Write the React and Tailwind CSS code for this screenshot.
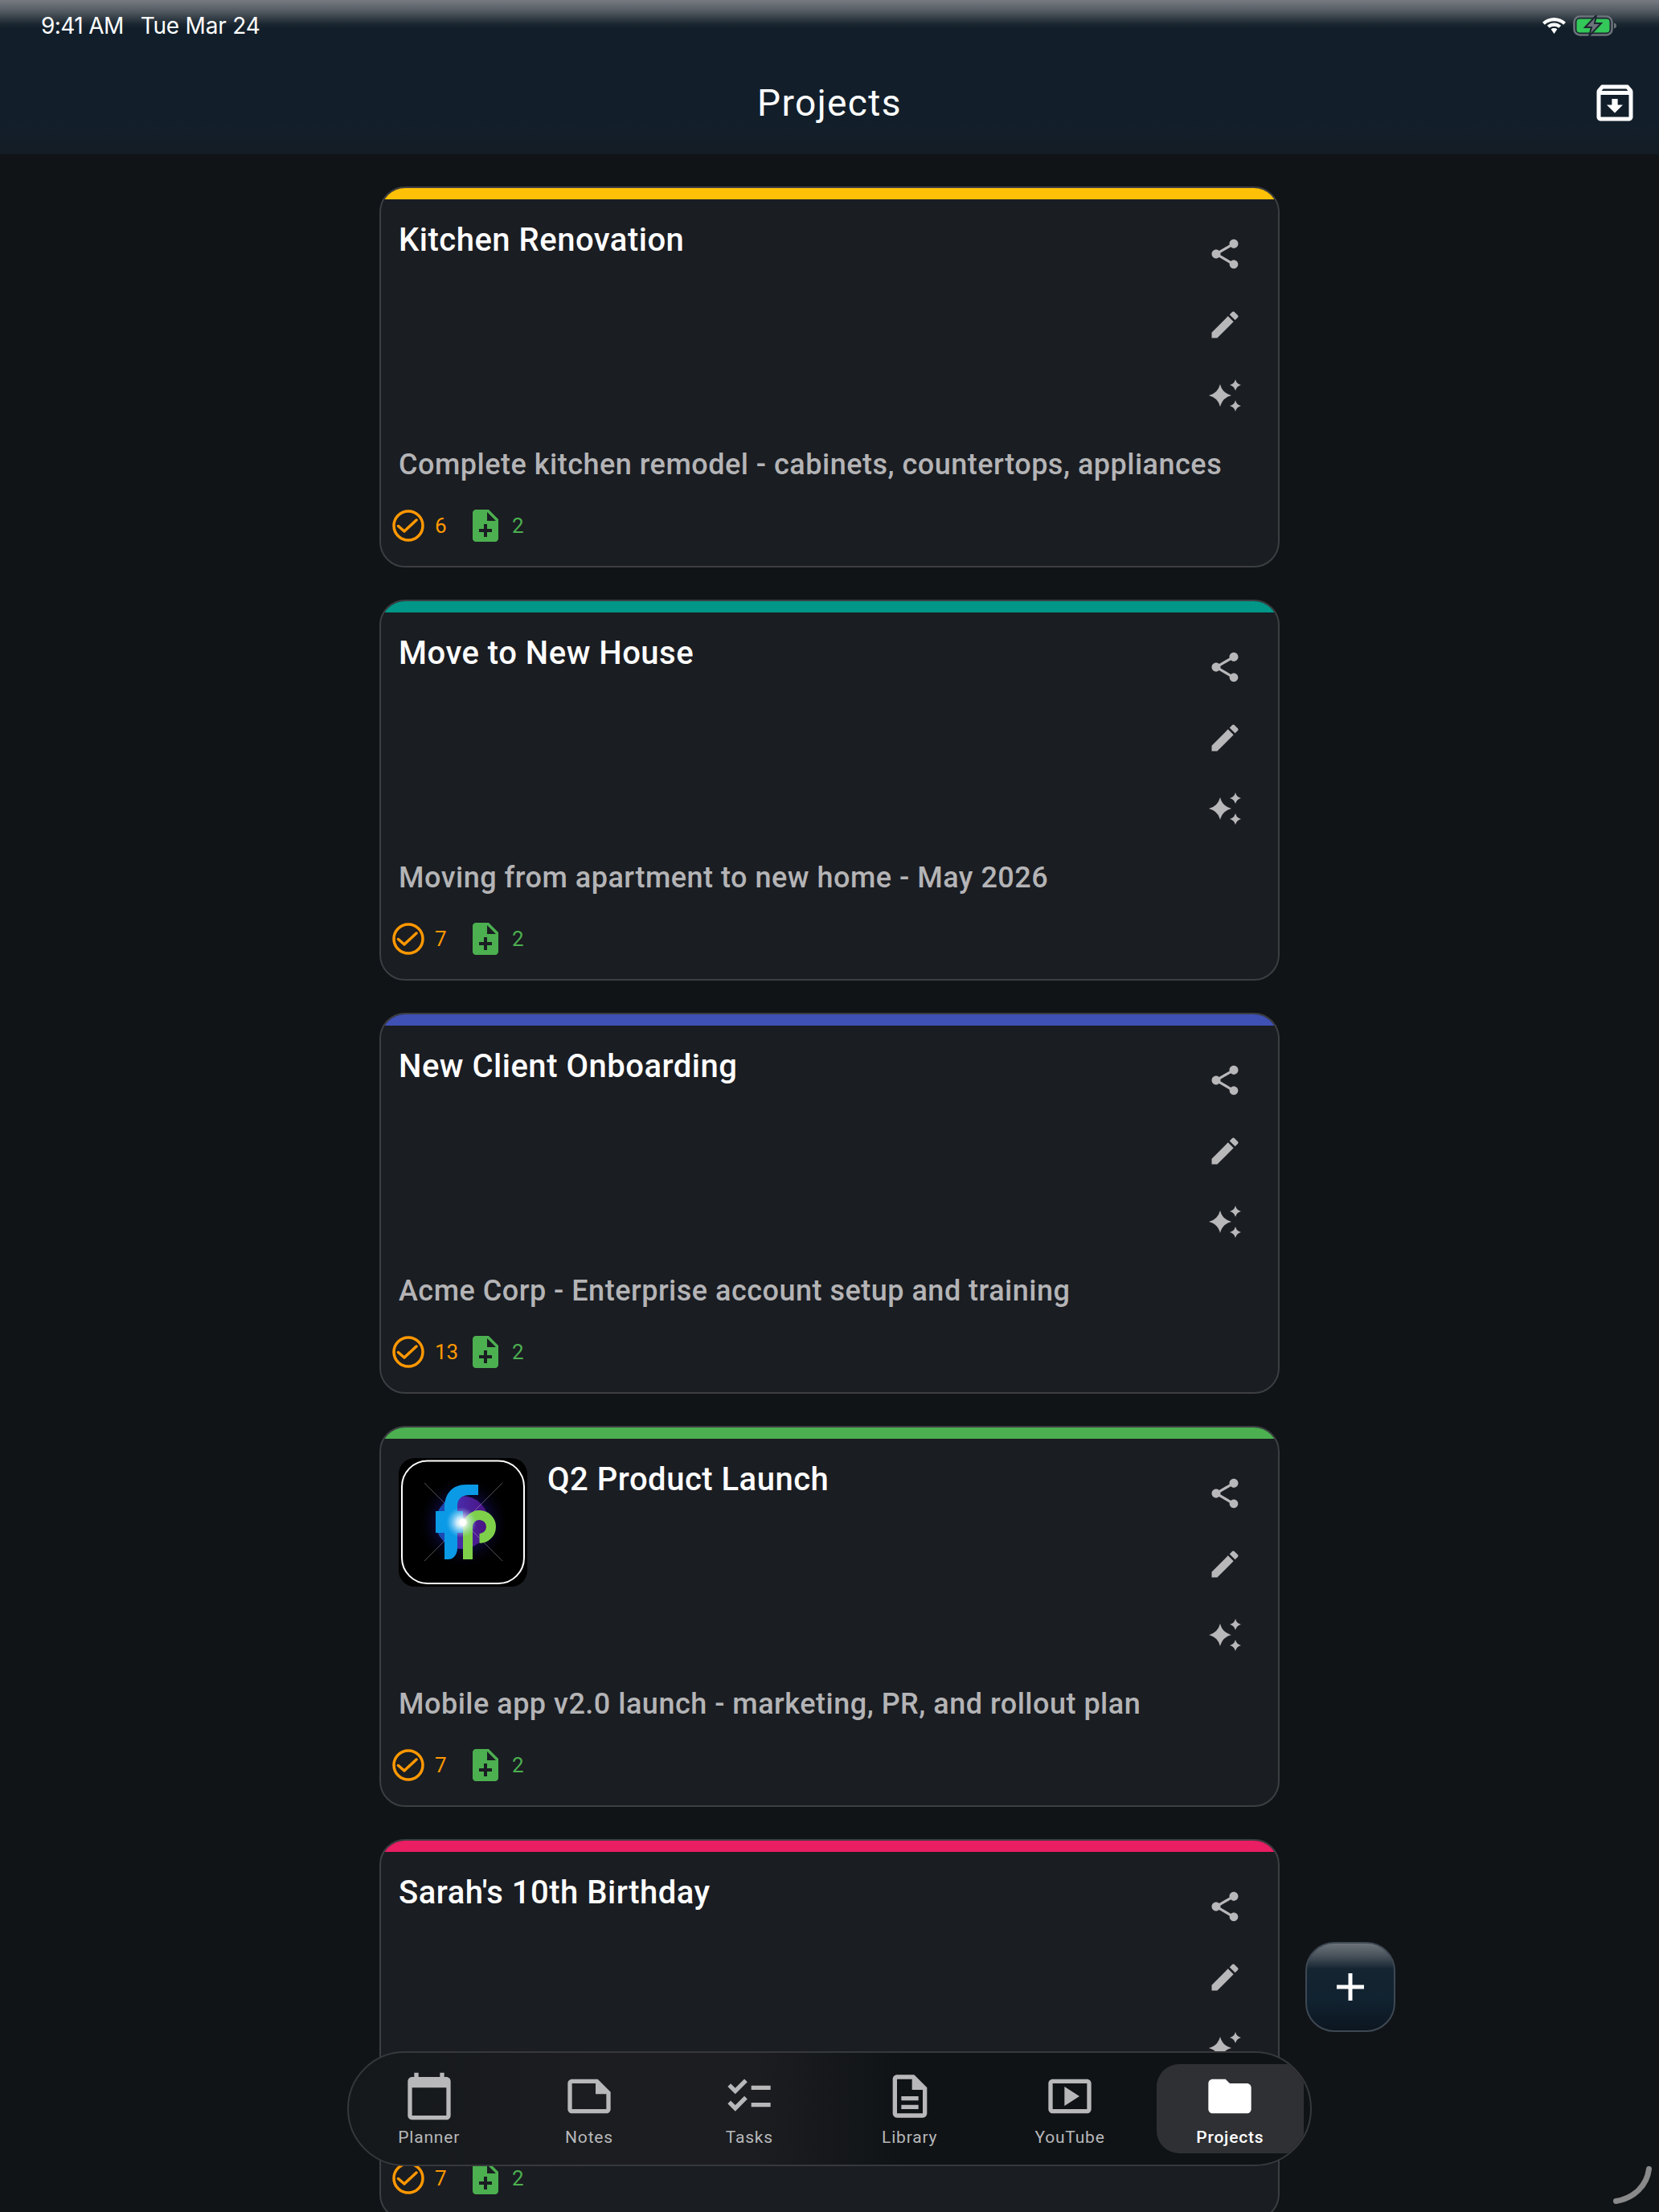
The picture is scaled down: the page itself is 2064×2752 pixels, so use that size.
const PROJECTS = [
  { id: 1, title: 'Kitchen Renovation', desc: 'Complete kitchen remodel - cabinets, countertops, appliances', tasks: 6, files: 2, bar: 'bg-[#ffc107]' },
  { id: 2, title: 'Move to New House', desc: 'Moving from apartment to new home - May 2026', tasks: 7, files: 2, bar: 'bg-[#009688]' },
  { id: 3, title: 'New Client Onboarding', desc: 'Acme Corp - Enterprise account setup and training', tasks: 13, files: 2, bar: 'bg-[#3f51b5]' },
  { id: 4, title: 'Q2 Product Launch', desc: 'Mobile app v2.0 launch - marketing, PR, and rollout plan', tasks: 7, files: 2, bar: 'bg-[#4caf50]', logo: true },
  // description sits behind the nav bar in the screenshot
  { id: 5, title: "Sarah's 10th Birthday", desc: '', tasks: 7, files: 2, bar: 'bg-[#e91e63]' },
]

const NAV = [
  { label: 'Planner', d: 'M20 3h-1V1h-2v2H7V1H5v2H4c-1.1 0-2 .9-2 2v16c0 1.1.9 2 2 2h16c1.1 0 2-.9 2-2V5c0-1.1-.9-2-2-2zm0 18H4V8h16v13z' },
  { label: 'Notes', d: 'M16 4H4c-1.1 0-2 .9-2 2v12.01c0 1.1.9 1.99 2 1.99h16c1.1 0 2-.9 2-2v-8l-6-6zM4 18.01V6h11v5h5v7.01H4z' },
  { label: 'Tasks', d: 'M22 7h-9v2h9V7zm0 8h-9v2h9v-2zM5.54 11 2 7.46l1.41-1.41 2.12 2.12 4.24-4.24 1.41 1.41L5.54 11zm0 8L2 15.46l1.41-1.41 2.12 2.12 4.24-4.24 1.41 1.41L5.54 19z' },
  { label: 'Library', d: 'M8 16h8v2H8zm0-4h8v2H8zm6-10H6c-1.1 0-2 .9-2 2v16c0 1.1.89 2 1.99 2H18c1.1 0 2-.9 2-2V8l-6-6zm4 18H6V4h7v5h5v11z' },
  { label: 'YouTube', d: 'M20 4H4c-1.1 0-2 .9-2 2v12c0 1.1.9 2 2 2h16c1.1 0 2-.9 2-2V6c0-1.1-.9-2-2-2zm0 14H4V6h16v12zM9.5 16.5l7-4.5-7-4.5v9z' },
  { label: 'Projects', active: true, d: 'M10 4H4c-1.1 0-1.99.9-1.99 2L2 18c0 1.1.9 2 2 2h16c1.1 0 2-.9 2-2V8c0-1.1-.9-2-2-2h-8l-2-2z' },
]

function Mat({ d, className }) {
  return (
    <svg viewBox="0 0 24 24" fill="currentColor" className={className}>
      <path d={d} />
    </svg>
  )
}

function star(cx, cy, r) {
  const k = r * 0.2
  return `M${cx} ${cy - r}Q${cx + k} ${cy - k} ${cx + r} ${cy}Q${cx + k} ${cy + k} ${cx} ${cy + r}Q${cx - k} ${cy + k} ${cx - r} ${cy}Q${cx - k} ${cy - k} ${cx} ${cy - r}Z`
}

function Sparkles() {
  return (
    <svg viewBox="0 0 44 44" fill="currentColor" className="w-11 h-11">
      <path d={star(16, 22, 14)} />
      <path d={star(35, 9, 7)} />
      <path d={star(35, 35, 7)} />
    </svg>
  )
}

function Logo() {
  return (
    <svg viewBox="0 0 160 160" className="w-40 h-40 shrink-0">
      <defs>
        <radialGradient id="halo" cx="50%" cy="50%" r="50%">
          <stop offset="0%" stopColor="#1c2a9a" stopOpacity="0.9" />
          <stop offset="60%" stopColor="#100c48" stopOpacity="0.6" />
          <stop offset="100%" stopColor="#000000" stopOpacity="0" />
        </radialGradient>
        <linearGradient id="disc" x1="0" y1="0" x2="1" y2="0">
          <stop offset="0%" stopColor="#0a55b5" />
          <stop offset="45%" stopColor="#4a2aa8" />
          <stop offset="100%" stopColor="#4a1080" />
        </linearGradient>
        <radialGradient id="flare" cx="50%" cy="50%" r="50%">
          <stop offset="0%" stopColor="#ffffff" />
          <stop offset="30%" stopColor="#ffffff" stopOpacity="0.8" />
          <stop offset="100%" stopColor="#9fd8ff" stopOpacity="0" />
        </radialGradient>
      </defs>
      <rect width="160" height="160" rx="20" fill="#000000" />
      <rect x="4" y="3.5" width="152" height="152.5" rx="32" fill="none" stroke="#ffffff" strokeWidth="2" />
      <circle cx="80" cy="80" r="58" fill="url(#halo)" />
      <circle cx="79" cy="80" r="33" fill="url(#disc)" />
      <path d="M32 31 129 128M129 31 32 128" stroke="#ffffff" strokeOpacity="0.4" strokeWidth="0.8" />
      <path d="M99 33H84C66 33 57 45 57 62V66H46V93H57V126H62C68 126 73 120 73 112V93H80V66H73V60C73 51 78 46 88 46H99Z" fill="#0a9ae6" />
      <path d="M86 126V85A14.500 14.500 0 1 1 100.500 100" fill="none" stroke="#7ed04a" strokeWidth="12" />
      <circle cx="78" cy="80" r="19" fill="url(#flare)" />
      <circle cx="80" cy="80" r="4.500" fill="#ffffff" />
    </svg>
  )
}

function ProjectCard({ project }) {
  return (
    <div className="w-[1120px] shrink-0 rounded-[32px] border-2 border-[#3c3e42] bg-[#1a1d22] overflow-hidden">
      <div className={`h-[14px] ${project.bar}`} />
      <div className="px-[22px] pt-6 pb-[30px]">
        <div className="flex h-[264px]">
          <div className="flex-1 flex items-start gap-[25px]">
            {project.logo && <Logo />}
            <h2 className="text-[40px] leading-[54px] font-medium tracking-[0.5px] text-white">{project.title}</h2>
          </div>
          <div className="w-[88px] flex flex-col text-[#b8b8ba]">
            <button className="h-[88px] flex items-center justify-center">
              <Mat className="w-11 h-11" d="M18 16.08c-.76 0-1.44.3-1.96.77L8.91 12.7c.05-.23.09-.46.09-.7s-.04-.47-.09-.7l7.05-4.11c.54.5 1.25.81 2.04.81 1.66 0 3-1.34 3-3s-1.34-3-3-3-3 1.34-3 3c0 .24.04.47.09.7L8.04 9.81C7.5 9.31 6.79 9 6 9c-1.66 0-3 1.34-3 3s1.34 3 3 3c.79 0 1.5-.31 2.04-.81l7.12 4.16c-.05.21-.08.43-.08.65 0 1.61 1.31 2.92 2.92 2.92 1.61 0 2.92-1.31 2.92-2.92s-1.31-2.92-2.92-2.92z" />
            </button>
            <button className="h-[88px] flex items-center justify-center">
              <Mat className="w-11 h-11" d="M3 17.25V21h3.75L17.81 9.94l-3.75-3.75L3 17.25zM20.71 7.04c.39-.39.39-1.02 0-1.41l-2.34-2.34c-.39-.39-1.02-.39-1.41 0l-1.83 1.83 3.75 3.75 1.83-1.83z" />
            </button>
            <button className="h-[88px] flex items-center justify-center">
              <Sparkles />
            </button>
          </div>
        </div>
        <p className="mt-4 h-[52px] text-[36px] leading-[52px] tracking-[0.5px] font-medium text-[#b4b4b6] truncate">{project.desc}</p>
        <div className="mt-[30px] -ml-2 flex items-center h-10 text-[26px]">
          <svg viewBox="0 0 40 40" fill="none" stroke="#ff9800" strokeWidth="3.5" className="w-10 h-10 shrink-0">
            <circle cx="20" cy="20" r="18" />
            <path d="M7.5 20.5 15 27 30 13" strokeLinecap="round" strokeLinejoin="round" />
          </svg>
          <span className="ml-[13px] w-[47px] text-[#ff9800]">{project.tasks}</span>
          <Mat className="w-12 h-12 -mx-2 shrink-0 text-[#4caf50]" d="M14 2H6c-1.1 0-1.99.9-1.99 2L4 20c0 1.1.89 2 1.99 2H18c1.1 0 2-.9 2-2V8l-6-6zm2 14h-3v3h-2v-3H8v-2h3v-3h2v3h3v2zm-3-7V3.5L18.5 9H13z" />
          <span className="ml-[17px] text-[#4caf50]">{project.files}</span>
        </div>
      </div>
    </div>
  )
}

export default function App() {
  return (
    <div className="relative w-[2064px] h-[2752px] overflow-hidden bg-[#111417] font-['Roboto',sans-serif]">
      {/* Header */}
      <header className="h-48 bg-[linear-gradient(180deg,#767b81_0px,#535a61_14px,#1a2630_30px,#121f2b_36px,#121f2b_150px,#141c24_192px)]">
        <div className="h-8 pt-4 box-content flex items-center justify-between px-[51px]">
          <div className="flex gap-[21px] text-[28px] leading-8 text-white font-['Inter',sans-serif]">
            <span className="tracking-[-0.6px]">9:41 AM</span>
            <span className="tracking-[-0.2px]">Tue Mar 24</span>
          </div>
          <div className="flex items-center gap-[9px]">
            <svg viewBox="0 0 29 20" fill="#ffffff" className="w-[29px] h-5">
              <path d="M14.5 0C9 0 4 2.100 0 5.700l2.800 3C6 5.900 10 4.200 14.500 4.200S23 5.900 26.200 8.700l2.800-3C25 2.100 20 0 14.500 0z" />
              <path d="M14.500 6.500c-3.300 0-6.300 1.200-8.700 3.300l2.900 3c1.600-1.300 3.600-2.100 5.800-2.100s4.200.8 5.800 2.100l2.900-3c-2.400-2.100-5.400-3.300-8.700-3.300z" />
              <path d="M14.500 13c-1.500 0-2.800.5-3.800 1.400l3.800 5.600 3.800-5.600c-1-.9-2.300-1.400-3.800-1.400z" />
            </svg>
            <svg viewBox="0 0 56 26" className="w-14 h-[26px]">
              <rect x="1.500" y="1.500" width="47" height="23" rx="7" fill="#1c2731" stroke="#6d737a" strokeWidth="2.500" />
              <rect x="4.500" y="4.500" width="41" height="17" rx="4" fill="#34c759" />
              <path d="M51 9.500c2 .5 3 1.800 3 3.500s-1 3-3 3.500z" fill="#6d737a" />
              <path d="M29 0 15 15h8l-3 11 15-16h-8z" fill="#6d737a" stroke="#1c2731" strokeWidth="2" />
            </svg>
          </div>
        </div>
        <div className="mt-8 h-24 grid grid-cols-[1fr_auto_1fr] items-center px-[25px]">
          <div />
          <h1 className="text-[46px] font-normal tracking-[1.4px] leading-none text-white">Projects</h1>
          <Mat className="w-[60px] h-[60px] justify-self-end text-white" d="M20.54 5.230l-1.390-1.680C18.880 3.210 18.470 3 18 3H6c-.47 0-.88.21-1.160.55L3.460 5.230C3.170 5.570 3 6.020 3 6.500V19c0 1.100.9 2 2 2h14c1.100 0 2-.9 2-2V6.500c0-.48-.17-.93-.46-1.270zM6.240 5h11.520l.81.97H5.440l.8-.97zM5 19V8h14v11H5zm8.450-9h-2.900v3H8l4 4 4-4h-2.550z" />
        </div>
      </header>

      {/* Project list */}
      <main className="flex flex-col items-center gap-10 pt-10">
        {PROJECTS.map((p) => (
          <ProjectCard key={p.id} project={p} />
        ))}
      </main>

      {/* Add button */}
      <button className="absolute left-[1624px] top-[2416px] w-28 h-28 rounded-[36px] border-2 border-[#3d4853] flex items-center justify-center bg-[linear-gradient(180deg,#6b7279_0%,#4a535c_14%,#152532_29%,#112230_65%,#0c1620_100%)]">
        <svg viewBox="0 0 34 34" fill="#ffffff" className="w-[34px] h-[34px]">
          <path d="M14.500 0h5v14.500H34v5H19.500V34h-5V19.500H0v-5h14.500z" />
        </svg>
      </button>

      {/* Bottom navigation */}
      <nav className="absolute left-[432px] top-[2552px] w-[1200px] h-[143px] rounded-[72px] border-2 border-[#36383c] overflow-hidden grid grid-cols-6 bg-[linear-gradient(90deg,#15181b_0%,#1b1d20_25%,#1b1d20_42%,#101316_58%,#101316_100%)]">
        {NAV.map((item) => (
          <div
            key={item.label}
            className={`min-w-0 my-[14px] flex flex-col items-center ${item.active ? 'mx-2 rounded-l-[28px] bg-[#2e3033] text-white font-medium' : 'text-[#b8b8ba]'}`}
          >
            <Mat className="w-16 h-16 mt-[8px] shrink-0" d={item.d} />
            <span className="text-[21px] leading-7 tracking-[0.8px] mt-[5px]">{item.label}</span>
          </div>
        ))}
      </nav>

      {/* Scroll indicator */}
      <svg viewBox="0 0 50 50" fill="none" className="absolute left-[2006px] top-[2694px] w-[50px] h-[50px]">
        <path d="M45.500 4.500C43 25 27 41 4.500 44.500" stroke="#8a8a8a" strokeWidth="7" strokeLinecap="round" />
      </svg>
    </div>
  )
}
